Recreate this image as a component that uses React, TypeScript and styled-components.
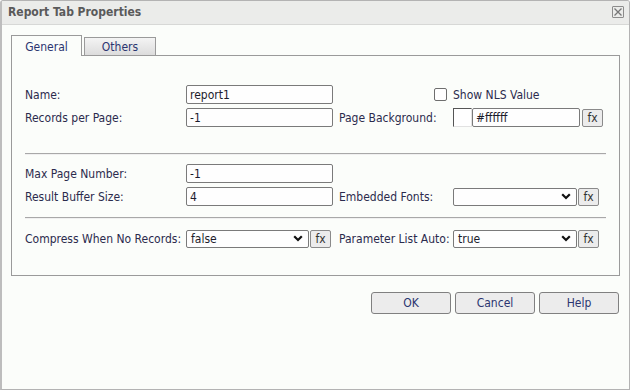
import React from "react";
import styled, { createGlobalStyle, css } from "styled-components";

const GlobalStyle = createGlobalStyle`
  html, body {
    margin: 0;
    padding: 0;
    background: #ffffff;
  }
  body {
    font-family: "DejaVu Sans Condensed", "DejaVu Sans", Verdana, sans-serif;
    font-size: 12px;
    color: #2b2b4d;
  }
  * {
    box-sizing: border-box;
  }
`;

const Chevron = () => (
  <svg width="10" height="7" viewBox="0 0 10 7">
    <path d="M1.2 1.2 L5 5 L8.8 1.2" fill="none" stroke="#111" strokeWidth="2.2" />
  </svg>
);

const CloseIcon = () => (
  <svg width="8" height="8" viewBox="0 0 8 8">
    <path d="M0.5 0.5 L7.5 7.5 M7.5 0.5 L0.5 7.5" stroke="#777" strokeWidth="1.3" />
  </svg>
);

export default function App() {
  return (
    <>
      <GlobalStyle />
      <Dialog>
        <TitleBar>
          <Title>Report Tab Properties</Title>
          <CloseButton>
            <CloseIcon />
          </CloseButton>
        </TitleBar>
        <Body>
          <Tabs>
            <Tab $active>General</Tab>
            <Tab>Others</Tab>
          </Tabs>
          <Panel>
            <FieldGrid>
              <Label>Name:</Label>
              <TextInput $width={147}>report1</TextInput>
              <CheckBox />
              <Label>Show NLS Value</Label>

              <Label>Records per Page:</Label>
              <TextInput $width={147}>-1</TextInput>
              <Label $second>Page Background:</Label>
              <Controls>
                <Swatch />
                <TextInput $width={108}>#ffffff</TextInput>
                <FxButton $gap={2}>fx</FxButton>
              </Controls>
            </FieldGrid>

            <Separator />

            <FieldGrid $top={10}>
              <Label>Max Page Number:</Label>
              <TextInput $width={147}>-1</TextInput>
              <span />
              <span />

              <Label>Result Buffer Size:</Label>
              <TextInput $width={147}>4</TextInput>
              <Label $second>Embedded Fonts:</Label>
              <Controls>
                <SelectBox $width={124}>
                  <span />
                  <Chevron />
                </SelectBox>
                <FxButton>fx</FxButton>
              </Controls>
            </FieldGrid>

            <Separator $top={11} />

            <FieldGrid $top={11}>
              <Label>Compress When No Records:</Label>
              <Controls>
                <SelectBox $width={123}>
                  <span>false</span>
                  <Chevron />
                </SelectBox>
                <FxButton>fx</FxButton>
              </Controls>
              <Label $second>Parameter List Auto:</Label>
              <Controls>
                <SelectBox $width={124}>
                  <span>true</span>
                  <Chevron />
                </SelectBox>
                <FxButton>fx</FxButton>
              </Controls>
            </FieldGrid>
          </Panel>
          <Footer>
            <Button>OK</Button>
            <Button>Cancel</Button>
            <Button>Help</Button>
          </Footer>
        </Body>
      </Dialog>
    </>
  );
}

const Dialog = styled.div`
  width: 630px;
  height: 390px;
  border: 1px solid #b3b3b3;
  border-left: 2px solid #bdbdbd;
  border-radius: 3px 3px 0 0;
  background: #fbfdfa;
  display: flex;
  flex-direction: column;
  overflow: hidden;
`;

const TitleBar = styled.div`
  height: 24px;
  flex-shrink: 0;
  display: flex;
  align-items: center;
  justify-content: space-between;
  padding: 0 5px 1px 6px;
  background: #ebecea;
  border-bottom: 1px solid #d7d8d6;
`;

const Title = styled.div`
  font-weight: bold;
  color: #5a5a5a;
`;

const CloseButton = styled.div`
  width: 12px;
  height: 12px;
  border: 1px solid #8c8c8c;
  border-radius: 1px;
  display: flex;
  align-items: center;
  justify-content: center;
`;

const Body = styled.div`
  flex: 1;
  padding: 10px 9px 0 9px;
  display: flex;
  flex-direction: column;
`;

const Tabs = styled.div`
  display: flex;
  align-items: flex-end;
  gap: 2px;
  position: relative;
  z-index: 1;
  margin-bottom: -1px;
`;

const Tab = styled.div<{ $active?: boolean }>`
  width: 72px;
  display: flex;
  align-items: center;
  justify-content: center;
  border: 1px solid #9a9a9a;
  color: #2b3570;
  ${(p) =>
    p.$active
      ? css`
          width: 71px;
          height: 21px;
          border-bottom: none;
          background: #fbfdfa;
          padding-top: 1px;
        `
      : css`
          height: 19px;
          background: linear-gradient(#f4f4f4, #dcdcdc);
          padding-top: 1px;
        `}
`;

const Panel = styled.div`
  height: 221px;
  border: 1px solid #9a9a9a;
  padding: 29px 13px 0 13px;
`;

const FieldGrid = styled.div<{ $top?: number }>`
  display: grid;
  grid-template-columns: 161px 147px 120px 1fr;
  grid-auto-rows: 19px;
  row-gap: 4px;
  align-items: center;
  margin-top: ${(p) => p.$top ?? 0}px;
`;

const Label = styled.div<{ $second?: boolean }>`
  white-space: nowrap;
  color: #2b2b4d;
  padding-left: ${(p) => (p.$second ? 6 : 0)}px;
`;

const TextInput = styled.div<{ $width: number }>`
  width: ${(p) => p.$width}px;
  height: 19px;
  border: 1px solid #7a7a7a;
  border-radius: 2px;
  background: #fefefe;
  padding: 0 3px;
  display: flex;
  align-items: center;
  color: #1c1c2c;
`;

const CheckBox = styled.div`
  justify-self: end;
  margin-right: 6px;
  width: 13px;
  height: 13px;
  border: 1px solid #6e6e6e;
  border-radius: 2px;
  background: #fff;
`;

const Controls = styled.div`
  display: flex;
  align-items: center;
`;

const Swatch = styled.div`
  width: 19px;
  height: 19px;
  border: 1px solid #e2e2e2;
  border-top-color: #555;
  border-left-color: #555;
  background: #fff;
`;

const SelectBox = styled.div<{ $width: number }>`
  width: ${(p) => p.$width}px;
  height: 18px;
  border: 1px solid #7a7a7a;
  border-radius: 2px;
  background: #fefefe;
  padding: 0 5px 0 4px;
  display: flex;
  align-items: center;
  justify-content: space-between;
  color: #1c1c2c;
`;

const FxButton = styled.div<{ $gap?: number }>`
  width: 21px;
  height: 18px;
  margin-left: ${(p) => p.$gap ?? 1}px;
  border: 1px solid #8a8a8a;
  border-radius: 2px;
  background: #ececec;
  display: flex;
  align-items: center;
  justify-content: center;
  color: #333;
`;

const Separator = styled.div<{ $top?: number }>`
  height: 1px;
  background: #a8a8a8;
  box-shadow: 0 1px 0 #f0f0f0;
  margin-top: ${(p) => p.$top ?? 26}px;
`;

const Footer = styled.div`
  display: flex;
  justify-content: flex-end;
  gap: 4px;
  margin-top: 16px;
  padding-right: 1px;
`;

const Button = styled.div`
  width: 80px;
  height: 22px;
  border: 1px solid #808080;
  border-radius: 3px;
  background: #ececec;
  display: flex;
  align-items: center;
  justify-content: center;
  color: #2b3570;
`;
